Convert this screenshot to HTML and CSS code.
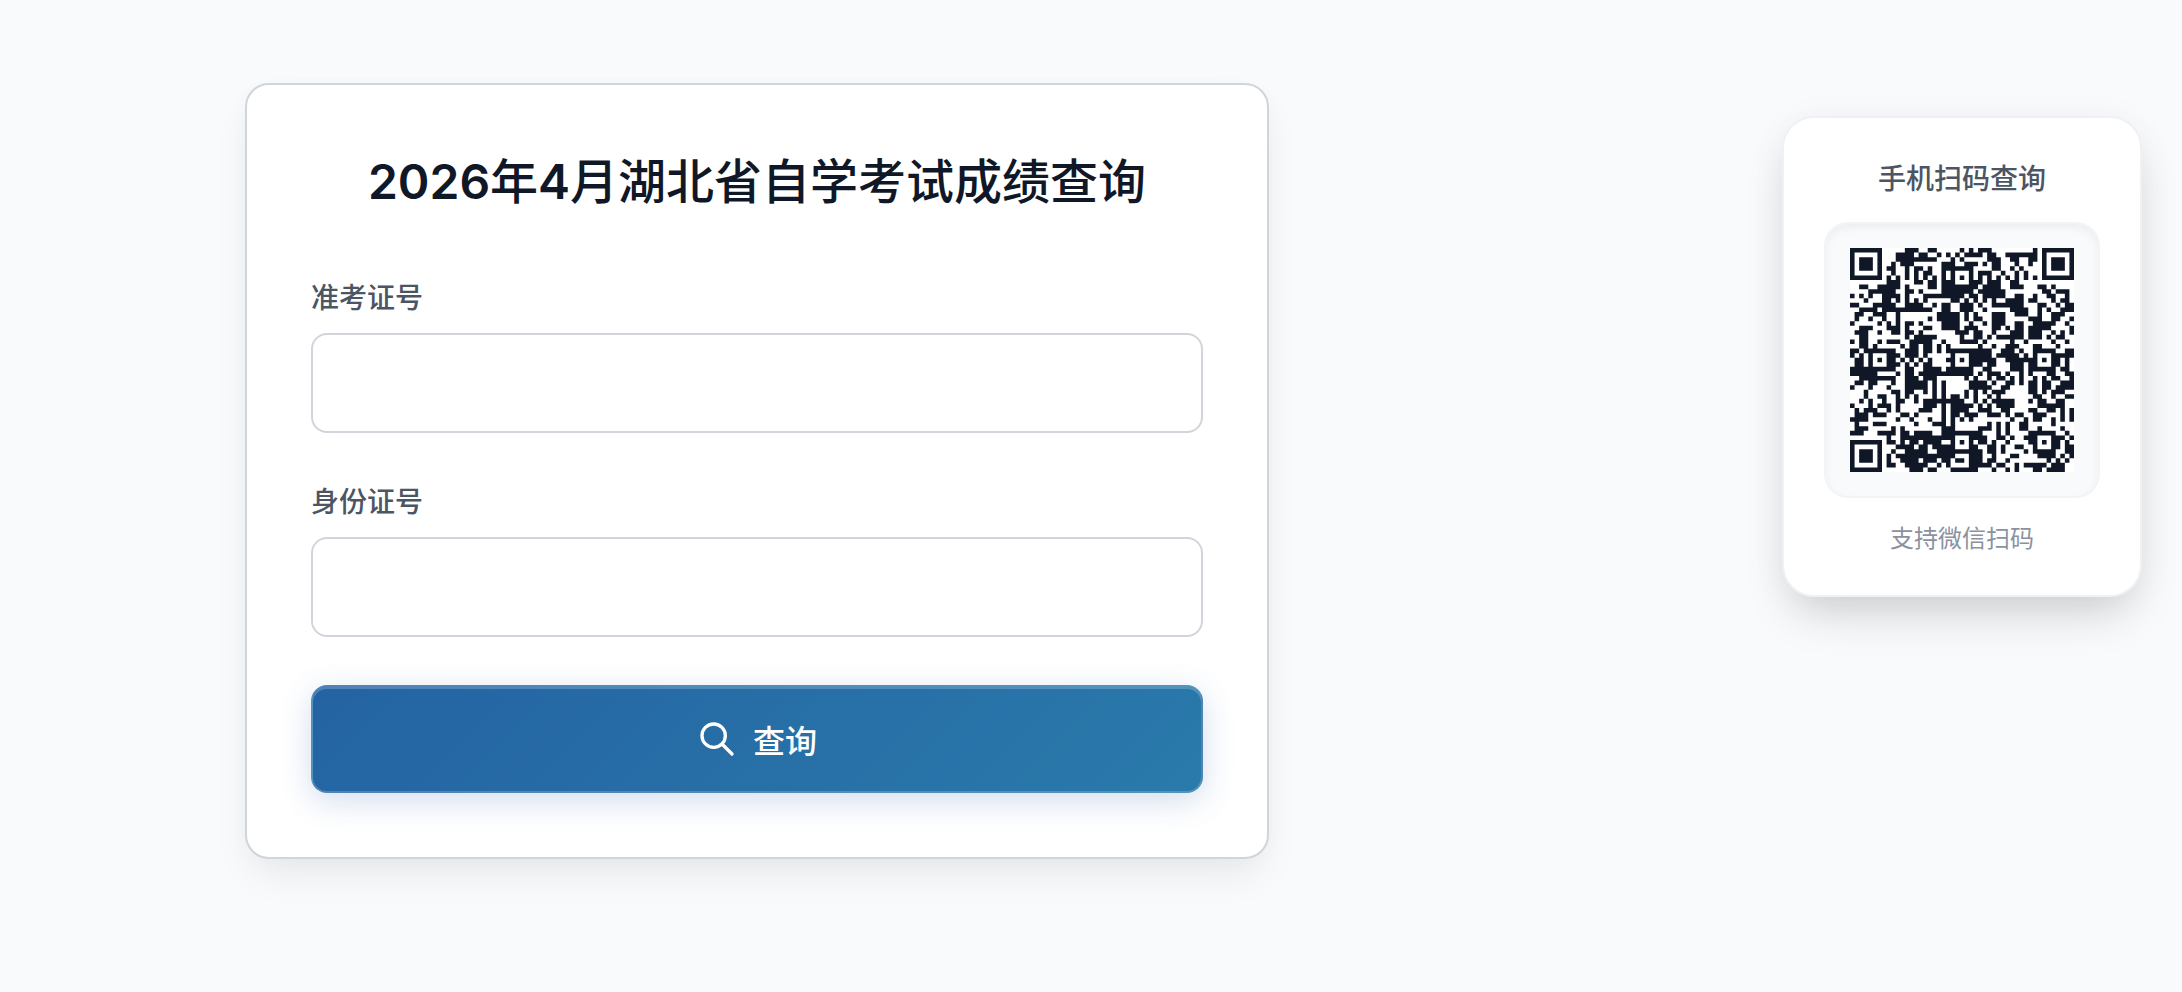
FILE: index.html
```html
<!DOCTYPE html>
<html lang="zh-CN">
<head>
  <meta charset="UTF-8" />
  <meta name="viewport" content="width=device-width, initial-scale=1.0" />
  <title>2026年4月湖北省自学考试成绩查询</title>
  <link rel="stylesheet" href="styles.css">
</head>
<body>

  <div class="page">
    <main class="card">
      <h1 class="card-title"><span class="num">2026</span>年<span class="num">4</span>月湖北省自学考试成绩查询</h1>
      <form class="query-form">
        <div class="field">
          <label for="ticket">准考证号</label>
          <input type="text" id="ticket" name="ticket" autocomplete="off">
        </div>
        <div class="field">
          <label for="idcard">身份证号</label>
          <input type="text" id="idcard" name="idcard" autocomplete="off">
        </div>
        <button type="submit" class="btn">
          <svg class="btn-icon" viewBox="0 0 24 24" fill="none" stroke="currentColor" stroke-width="2" stroke-linecap="round" stroke-linejoin="round" aria-hidden="true">
            <path d="M21 21l-6-6m2-5a7 7 0 11-14 0 7 7 0 0114 0z" />
          </svg>
          <span>查询</span>
        </button>
      </form>
    </main>

    <aside class="qr-card">
      <h2 class="qr-title">手机扫码查询</h2>
      <div class="qr-box">
        <svg class="qr-code" id="qrCode" viewBox="0 0 49 49" role="img" aria-label="二维码"></svg>
      </div>
      <p class="qr-note">支持微信扫码</p>
    </aside>
  </div>

  <script src="script.js"></script>
</body>
</html>
```
FILE: styles.css
```css
* {
  margin: 0;
  padding: 0;
  box-sizing: border-box;
}

body {
  font-family: Inter, "Noto Sans CJK SC", sans-serif;
  background: #f9fafc;
  color: #101828;
}

.page {
  display: grid;
  grid-template-columns: minmax(0, 1fr) 668px;
  align-items: start;
  min-height: 100vh;
  padding: 83px 40px;
}

.card {
  width: 100%;
  max-width: 1024px;
  margin: 0 auto;
  padding: 64px;
  background: #fff;
  border: 2px solid #d1d5db;
  border-radius: 24px;
  box-shadow: 0 20px 40px -8px rgba(0, 0, 0, 0.08), 0 4px 24px rgba(0, 0, 0, 0.02);
}

.card-title {
  margin-bottom: 62px;
  font-size: 48px;
  font-weight: 500;
  line-height: 66px;
  text-align: center;
}

.card-title .num {
  font-weight: 600;
}

.query-form {
  display: flex;
  flex-direction: column;
  gap: 48px;
}

.field {
  display: flex;
  flex-direction: column;
  gap: 14px;
}

.field label {
  font-size: 28px;
  font-weight: 500;
  line-height: 42px;
  color: #4b5563;
}

.field input {
  width: 100%;
  height: 100px;
  padding: 0 32px;
  font: inherit;
  font-size: 32px;
  color: inherit;
  background: #fff;
  border: 2px solid #d1d5db;
  border-radius: 16px;
  outline: none;
}

.field input:focus {
  border-color: #2563a5;
}

.btn {
  display: flex;
  align-items: center;
  justify-content: center;
  gap: 16px;
  height: 108px;
  font: inherit;
  font-size: 32px;
  font-weight: 500;
  color: #fff;
  background: linear-gradient(135deg, #2463a3, #2a7aab);
  border: 2px solid rgba(255, 255, 255, 0.2);
  border-radius: 16px;
  box-shadow: 0 8px 32px rgba(36, 90, 170, 0.2), inset 0 2px 0 rgba(255, 255, 255, 0.2);
  cursor: pointer;
}

.btn-icon {
  width: 40px;
  height: 40px;
}

/* QR card */
.qr-card {
  justify-self: end;
  width: 360px;
  margin-top: 33px;
  padding: 40px;
  text-align: center;
  background: #fff;
  border: 2px solid #f0f1f4;
  border-radius: 32px;
  box-shadow: 0 24px 48px -12px rgba(0, 0, 0, 0.18), 0 4px 40px rgba(0, 0, 0, 0.04);
}

.qr-title {
  margin-bottom: 22px;
  font-size: 28px;
  font-weight: 500;
  line-height: 42px;
  color: #4b5563;
}

.qr-box {
  margin-bottom: 24px;
  padding: 24px;
  background: #f9fafc;
  border: 2px solid #f3f4f6;
  border-radius: 24px;
  box-shadow: inset 0 4px 8px rgba(0, 0, 0, 0.05);
}

.qr-code {
  display: block;
  width: 100%;
  background: #fff;
  fill: #101828;
}

.qr-note {
  font-size: 24px;
  line-height: 33px;
  color: #8a92a0;
}
```
FILE: script.js
```js
// 49 x 49 modules, 1 = dark
const modules = [
  '1111111000001110011000001' + '010111000000000101111111',
  '1000001000111101100101010' + '111101100111111101000001',
  '1011101000111111111000101' + '000001110011001101011101',
  '1011101001011100000011100' + '111010110001001001011101',
  '1011101011001011010011111' + '110000110010100001011101',
  '1000001001001010110010100' + '010111001001010001000001',
  '1111111010101010101010101' + '010101010101010101111111',
  '0000000011100011011011100' + '011101110011000000000000',
  '0011001111101000011011111' + '111011110011100011010000',
  '0000111111001101000011111' + '110111111000000001101110',
  '1010100111101000111111111' + '011011111001100100110010',
  '0001000110101010100000110' + '101010100111101100010110',
  '1100011111001111001011001' + '110100111111100011001011',
  '0011110111111111110011001' + '110010000011110010100111',
  '0110011100100000000111110' + '101000111001110010011100',
  '0100100100100000010111110' + '101100111000001110011001',
  '1000001010101101000011110' + '010010111001100111110010',
  '0011100011101000110011110' + '111000110101101111100001',
  '0111001001101101000000011' + '101100100011101110010101',
  '0011000000001011111000001' + '001101011111101110101100',
  '1011001011100111110010001' + '111010000010010000010010',
  '0011010000010110110101000' + '000100100111000110001000',
  '1101111111001110110101111' + '111111001110100111110011',
  '1010100011101110100000100' + '011111011111010100011111',
  '0110101011010101010001101' + '011111100111111101011010',
  '0110100011101010110000100' + '011101100011101100011010',
  '1111111111001100111101111' + '110011000011101111110110',
  '1111110000101101111111111' + '110101110100101000110011',
  '0011111111001110111000000' + '101001011010100101011001',
  '0110110001001111101010000' + '011110100110101101100111',
  '1000100010001111101010000' + '011111001100001101101111',
  '0001000001101100101010000' + '101010111000001101011100',
  '0001001100101010001010110' + '101001010000000110010011',
  '0010100100110010111111111' + '001010111110001011001100',
  '1000101110100000111010111' + '110101011110000011111100',
  '0101110010100001110010111' + '100111001100001100110101',
  '0111011100011010000010110' + '111001110101100111000101',
  '1111000000100100010010101' + '010000000010010110010101',
  '0100011100000010001110100' + '000001010100110000010000',
  '0111000001010000000011100' + '000111010100110010000100',
  '1110001111011011110011111' + '111100010100001111110010',
  '0000000010011111111111100' + '011110011010011100011101',
  '1111111011010110111100101' + '010110100100001101011010',
  '1000001000111101101111100' + '011001101001100100011011',
  '1011101001001111100111111' + '111101101000010111110011',
  '1011101010111111111111100' + '011100100011000011110101',
  '1011101010011110111011011' + '011101100100000000101010',
  '1000001011001111100101000' + '011111011001011111011100',
  '1111111000000111011000111' + '111000100101000110111100'
];

let path = '';
modules.forEach((row, y) => {
  for (const run of row.matchAll(/1+/g)) {
    path += `M${run.index} ${y}h${run[0].length}v1h-${run[0].length}z`;
  }
});

document.getElementById('qrCode').innerHTML = `<path d="${path}" />`;
```
